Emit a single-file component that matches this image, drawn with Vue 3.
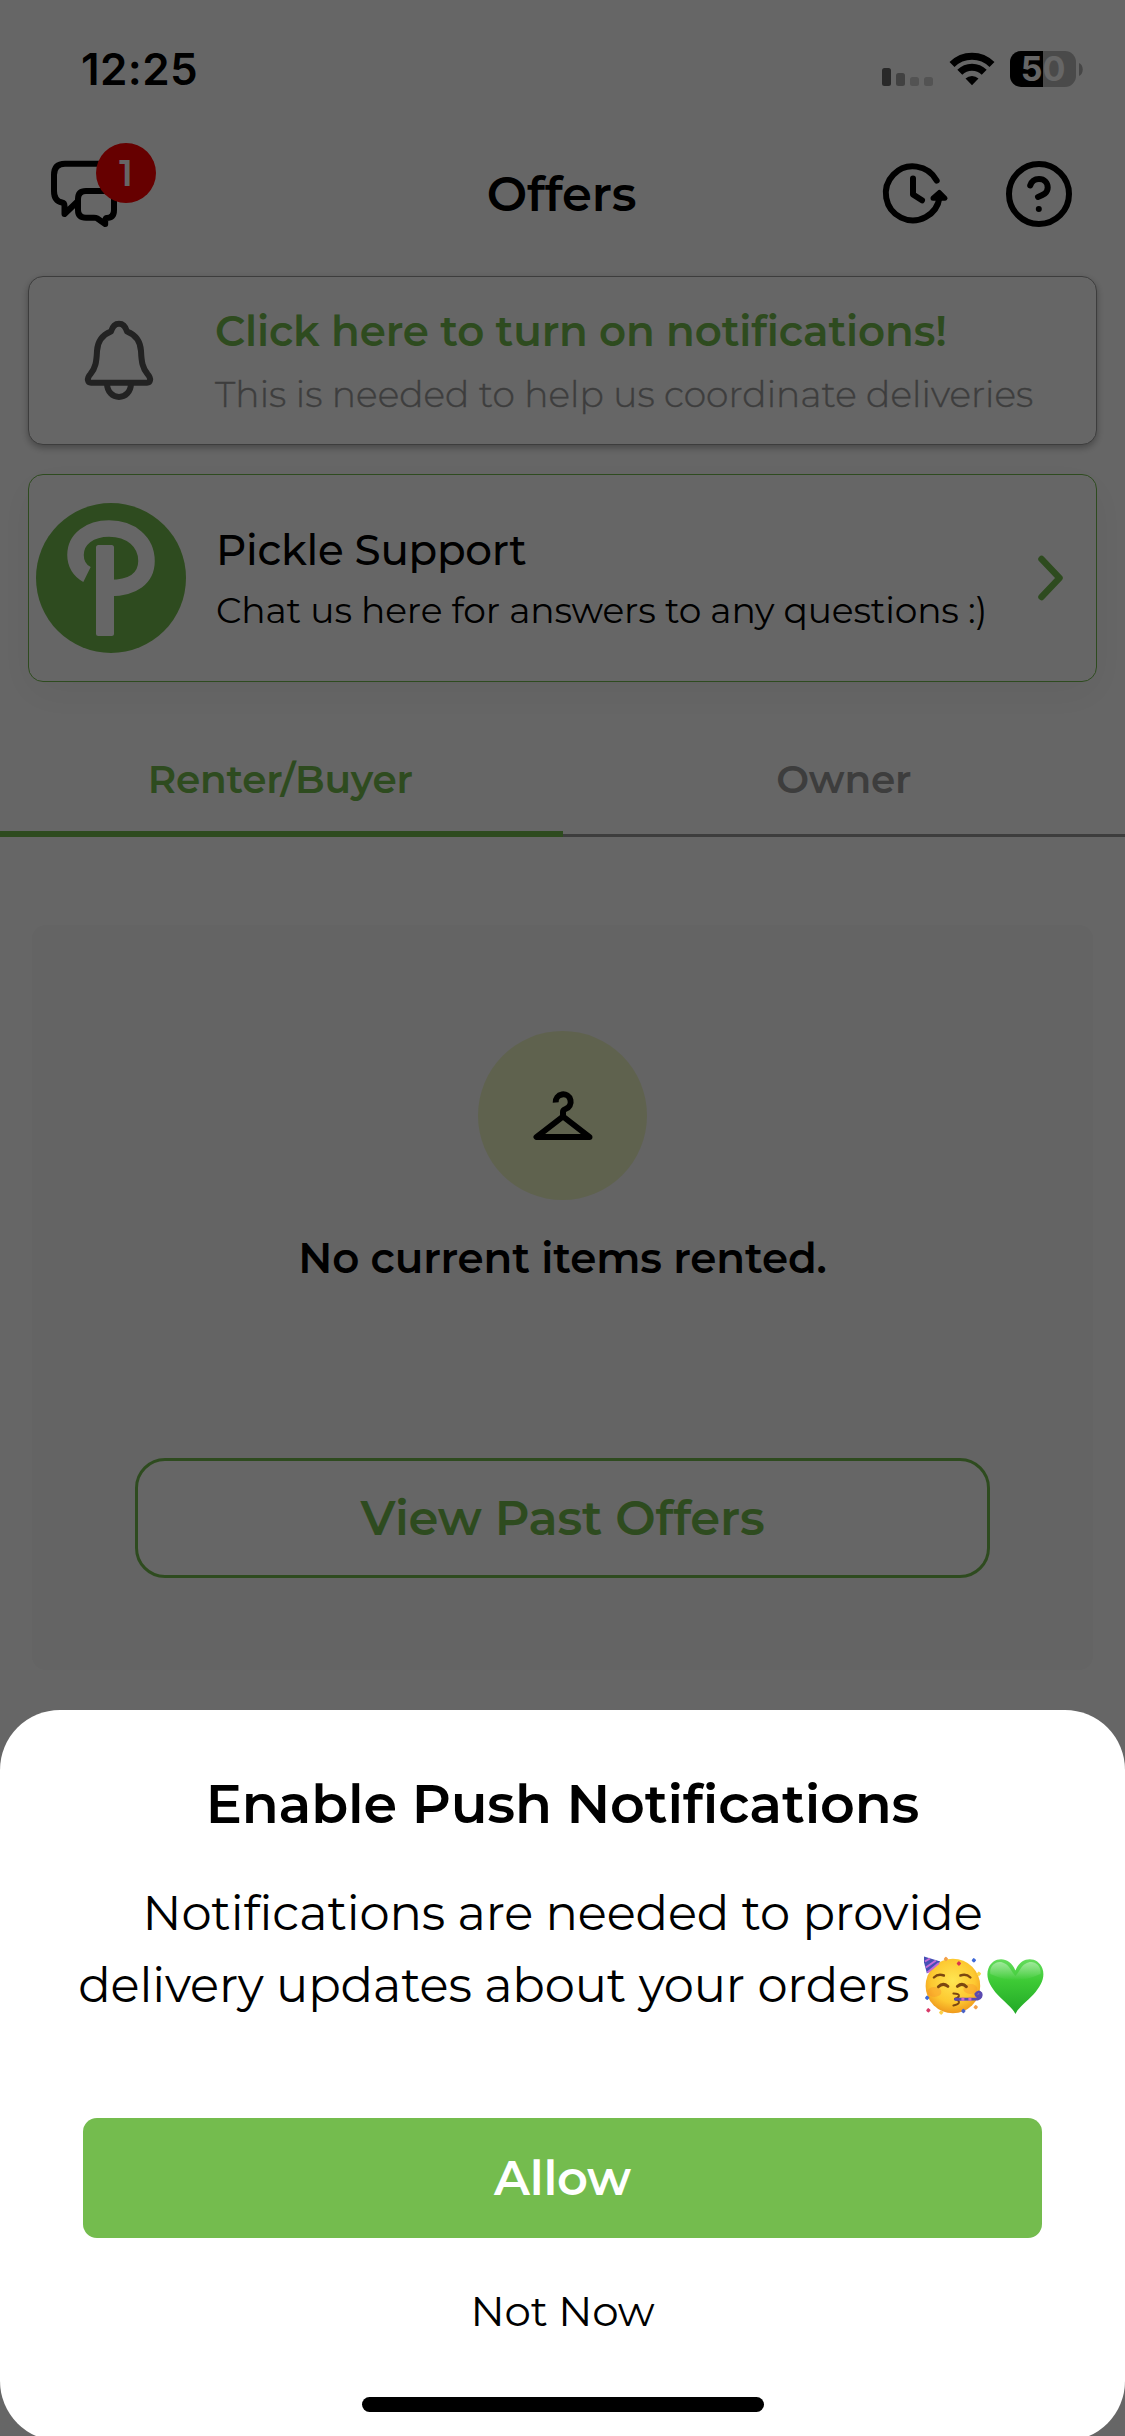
<script setup>
const signalBars = [
  { x: 0, h: 18, fill: '#666' },
  { x: 14, h: 13, fill: '#a3a3a3' },
  { x: 28, h: 9, fill: '#cfcfcf' },
  { x: 42, h: 9, fill: '#cfcfcf' },
]

const confetti = [
  { x: 44.5, y: 17.5, c: '#d8344f' },
  { x: 59.5, y: 14.3, c: '#3f6ad8' },
  { x: 31.5, y: 13, c: '#f2a04a' },
  { x: 64.5, y: 27.8, c: '#fbd84a' },
  { x: 12.8, y: 51.8, c: '#3f6ad8' },
  { x: 14, y: 64.3, c: '#d83a68' },
  { x: 26.8, y: 66.5, c: '#fbd04a' },
  { x: 49, y: 65, c: '#4a62c8' },
  { x: 61.3, y: 61.2, c: '#f2a04a' },
]
</script>

<template>
  <div class="screen">
    <main class="page">
      <div class="status">
        <span class="time">12:25</span>
        <div class="indicators">
          <svg class="signal" width="51" height="33" viewBox="0 0 51 33">
            <rect v-for="b in signalBars" :key="b.x" :x="b.x" :y="33 - b.h" width="9" :height="b.h" rx="2.5" :fill="b.fill" />
          </svg>
          <svg class="wifi" width="46" height="34" viewBox="948.5 52 46 34">
            <path d="M951.5 64.5A28.3 28.3 0 0 1 991.5 64.5" fill="none" stroke="#000" stroke-width="7" />
            <path d="M959.3 72.3A17.3 17.3 0 0 1 983.7 72.3" fill="none" stroke="#000" stroke-width="7" />
            <path d="M965 78.6A9.3 9.3 0 0 1 978 78.6L971.5 85.2Z" />
          </svg>
          <div class="battery"><span>50</span></div>
          <svg width="4" height="13" viewBox="0 0 4 13"><path d="M0 0C5 2 5 11 0 13Z" fill="#b0b0b0" /></svg>
        </div>
      </div>

      <header class="header">
        <div class="chats">
          <svg width="72" height="72" viewBox="48 158 72 72" fill="none" stroke="#000" stroke-width="6" stroke-linejoin="round" stroke-linecap="round">
            <path d="M109 188V174Q109 163.700 98.500 163.700H65Q54 163.700 54 175V191Q54 201 62 202.500Q64.500 203 64.500 206V214L77 202" />
            <path d="M86 191H106Q114 191 114 199V210Q114 218 106.500 218Q105 218 105.200 224L97 218.300Q96 217.700 94 217.700H86Q78 217.700 78 210V199Q78 191 86 191Z" />
          </svg>
          <span class="badge">1</span>
        </div>
        <h1>Offers</h1>
        <div class="actions">
          <svg width="70" height="68" viewBox="13 15 70 68" fill="none" stroke="#000" stroke-width="6" stroke-linecap="round" stroke-linejoin="round">
            <path d="M70.700 35.700A27 27 0 1 0 73.600 52" />
            <path d="M67 53.200L73.300 47.500L79 53.200Z" fill="#000" stroke-width="5" />
            <path d="M47 33.500V49.500L56 55.300" />
          </svg>
          <svg width="68" height="68" viewBox="139 15 68 68" fill="none" stroke="#000" stroke-width="6" stroke-linecap="round">
            <circle cx="173" cy="49" r="30" />
            <path d="M164.200 40.500C165.500 36.500 169 34 173 34C178.500 34 181.700 38 181.700 42.500C181.700 48 177 50 172 52" />
            <circle cx="172.800" cy="64" r="3" fill="#000" stroke="none" />
          </svg>
        </div>
      </header>

      <section class="card notice">
        <svg width="72" height="84" viewBox="83 319 72 84" fill="none" stroke="#555" stroke-width="6" stroke-linejoin="round">
          <path d="M119 323.700C114 323.700 112 328 111 331.500C102 335 97.500 342 97 351C96.500 362 95.500 368 90.500 374C86 379 88 382.700 91 382.700H147C150 382.700 152 379 147.500 374C142.500 368 141.500 362 141 351C140.500 342 136 335 127 331.500C126 328 124 323.700 119 323.700Z" />
          <path d="M107 383C107 401.500 131 401.500 131 383" />
        </svg>
        <div class="copy">
          <p class="title">Click here to turn on notifications!</p>
          <p class="sub">This is needed to help us coordinate deliveries</p>
        </div>
      </section>

      <section class="card support">
        <svg width="150" height="150" viewBox="6 8 150 150">
          <circle cx="81" cy="83" r="75" fill="#74bc4e" />
          <path d="M57 79.500C50 76 45.500 69 45.500 60C45.500 44 60 33.500 79 33.500C101 33.500 116.500 47 116.500 66C116.500 83 103 93 80 93" fill="none" stroke="#fff" stroke-width="16.500" />
          <rect x="66" y="50" width="18" height="91" rx="2.500" fill="#fff" />
        </svg>
        <div class="copy">
          <p class="title">Pickle Support</p>
          <p class="sub">Chat us here for answers to any questions :)</p>
        </div>
        <svg class="chevron" width="27" height="48" viewBox="0 0 27 48" fill="none" stroke="#74bc4e" stroke-width="6.500" stroke-linecap="round" stroke-linejoin="round">
          <path d="M4.500 5L22.500 24L4.500 43" />
        </svg>
      </section>

      <nav class="tabs">
        <span class="tab active">Renter/Buyer</span>
        <span class="tab">Owner</span>
      </nav>

      <section class="panel">
        <div class="circle">
          <svg width="66" height="54" viewBox="530 1088 66 54" fill="none" stroke="#000" stroke-width="6" stroke-linejoin="round">
            <path d="M555.700 1101.500A7.500 7.500 0 1 1 565.500 1108Q563 1108.800 563 1111V1115.500" />
            <path d="M563 1115.500L536.500 1136H589.500Z" />
          </svg>
        </div>
        <p class="empty">No current items rented.</p>
        <button class="past">View Past Offers</button>
      </section>
    </main>

    <div class="overlay"></div>

    <section class="sheet">
      <h2>Enable Push Notifications</h2>
      <p class="message">
        Notifications are needed to provide<br />delivery updates about your orders
        <svg class="emoji" role="img" aria-label="🥳💚" width="124" height="66" viewBox="9.600 5 124 66">
          <defs>
            <radialGradient id="face" cx=".5" cy=".4" r=".62">
              <stop offset="0" stop-color="#ffe652" />
              <stop offset=".65" stop-color="#fdc830" />
              <stop offset="1" stop-color="#ee951b" />
            </radialGradient>
            <linearGradient id="heart" x1="0" y1="0" x2="0" y2="1">
              <stop offset="0" stop-color="#64dc5c" />
              <stop offset=".4" stop-color="#3dca35" />
              <stop offset="1" stop-color="#22a827" />
            </linearGradient>
            <linearGradient id="shine" x1="0" y1="0" x2="0" y2="1">
              <stop offset="0" stop-color="#fff" stop-opacity=".4" />
              <stop offset="1" stop-color="#fff" stop-opacity="0" />
            </linearGradient>
          </defs>
          <circle cx="38.500" cy="40" r="27.300" fill="url(#face)" />
          <ellipse cx="20" cy="46" rx="7" ry="5" fill="#f58a2a" opacity=".35" />
          <ellipse cx="56" cy="43" rx="7" ry="5" fill="#f58a2a" opacity=".35" />
          <path d="M8 10L26 15.500Q20 22 12.500 27.500Z" fill="#4650b5" />
          <path d="M10.500 15.500L15.500 12.500M11.500 21.500L21.500 14.500M13 26.500L24.500 17" stroke="#c56bd8" stroke-width="2" />
          <g fill="none" stroke="#7c4710" stroke-width="2.400" stroke-linecap="round">
            <path d="M19.500 31.500Q23.500 27.500 29.500 29.500" />
            <path d="M46 29.500Q52 27.500 56 31.500" />
            <path d="M24 40.700Q28.500 36.200 33.500 40.300" stroke-width="3" />
            <path d="M43 40.300Q48 36.200 52 40.700" stroke-width="3" />
            <path d="M39 47.500Q45 47.500 44.500 50Q44 52 40 53Q45 54 44.500 56.500Q44 58.500 39 59.500" stroke-width="2" />
          </g>
          <path d="M41 53.300L63 53Q68 51 66.500 47.500Q64 44.500 61.500 48Q62 51 64.500 49.500" fill="none" stroke="#5a4ab0" stroke-width="3" stroke-linecap="round" />
          <path d="M47 53.300H50M54 53.200H57" stroke="#d06ac8" stroke-width="3" />
          <rect v-for="(p, i) in confetti" :key="i" :x="p.x - 1.800" :y="p.y - 1.800" width="3.600" height="3.600" rx="1" :fill="p.c" :transform="`rotate(40 ${p.x} ${p.y})`" />
          <path d="M101 68C98 61.500 90 56 83 48.500C75 39.500 71 31 74 22.500C78.500 10.500 95 9.500 101 24.500C107 9.500 123.500 10.500 128 22.500C131 31 127 39.500 119 48.500C112 56 104 61.500 101 68Z" fill="url(#heart)" />
          <path d="M76 28C74 17 88 10 96 23Q99 28 101 30Q103 28 106 23C114 10 128 17 126 28Q113 34 101 34Q89 34 76 28Z" fill="url(#shine)" />
        </svg>
      </p>
      <button class="allow">Allow</button>
      <button class="later">Not Now</button>
      <div class="home"></div>
    </section>
  </div>
</template>

<style>
body { margin: 0; }
</style>

<style scoped>
.screen {
  position: relative;
  width: 1125px;
  height: 2436px;
  overflow: hidden;
  background: #fff;
  color: #000;
  font-family: Montserrat, Inter, sans-serif;
}
h1, h2, p { margin: 0; }
svg { display: block; flex: none; }
button { font-family: inherit; padding: 0; border: 0; background: none; color: inherit; }

.page { display: flex; flex-direction: column; }
.status {
  height: 138px;
  box-sizing: border-box;
  padding: 0 42px 0 81px;
  display: flex;
  align-items: center;
  justify-content: space-between;
  font-family: Inter, sans-serif;
}
.time { font-size: 44px; font-weight: 600; line-height: 54px; letter-spacing: .4px; }
.indicators { display: flex; align-items: center; }
.wifi { margin: 0 15px 0 16px; }
.battery {
  width: 66px;
  height: 36px;
  margin-right: 3px;
  border-radius: 11px;
  background: linear-gradient(90deg, #000 50%, #b9b9b9 50%);
  color: #fff;
  font-size: 34px;
  font-weight: 700;
  line-height: 36px;
  text-align: center;
}

.header {
  height: 112px;
  padding: 0 52px 0 50px;
  display: grid;
  grid-template-columns: 1fr auto 1fr;
  align-items: center;
}
.chats { position: relative; width: 72px; margin-left: -2px; }
.badge {
  position: absolute;
  left: 48px;
  top: -15px;
  width: 60px;
  height: 60px;
  border-radius: 50%;
  background: #f00;
  color: #fff;
  font-size: 36px;
  font-weight: 600;
  line-height: 60px;
  text-align: center;
}
h1 { font-size: 48px; font-weight: 600; line-height: 60px; letter-spacing: -.15px; }
.actions { display: flex; gap: 56px; justify-content: flex-end; }

.card {
  margin: 0 28px;
  box-sizing: border-box;
  border-radius: 15px;
  border: 1px solid #999;
  background: #fff;
  display: flex;
  align-items: center;
}
.notice {
  height: 169px;
  margin-top: 26px;
  padding-left: 54px;
  gap: 60px;
  box-shadow: 0 3px 7px rgba(0, 0, 0, .3);
}
.notice .copy { padding-top: 4px; }
.notice .title { color: #74bc4e; font-size: 42px; font-weight: 600; line-height: 63px; letter-spacing: -.14px; }
.notice .sub { color: #999; font-size: 36px; font-weight: 300; line-height: 63px; letter-spacing: .07px; -webkit-text-stroke: .4px #999; }
.support {
  height: 208px;
  margin-top: 29px;
  padding: 0 32px 0 7px;
  gap: 30px;
  border-color: #74bc4e;
  box-shadow: 0 12px 40px rgba(0, 0, 0, .05);
}
.support .copy { padding-top: 4px; }
.support .title { font-size: 42px; font-weight: 500; line-height: 60px; letter-spacing: -.25px; }
.support .sub { font-size: 36px; font-weight: 400; line-height: 60px; letter-spacing: -.16px; }
.chevron { margin-left: auto; }

.tabs { display: flex; height: 116px; margin-top: 39px; }
.tab {
  flex: 1;
  text-align: center;
  font-size: 39px;
  font-weight: 600;
  line-height: 116px;
  letter-spacing: -.22px;
  color: #999;
  box-shadow: inset 0 -3px #999;
}
.tab.active { color: #74bc4e; box-shadow: inset 0 -6px #74bc4e; text-indent: -2px; }

.panel {
  height: 745px;
  margin: 88px 32px 0;
  box-sizing: border-box;
  padding: 106px 103px 0;
  border-radius: 14px;
  background: #f9f9f9;
  display: flex;
  flex-direction: column;
  align-items: center;
}
.circle {
  width: 169px;
  height: 169px;
  border-radius: 50%;
  background: #edf5c3;
  display: flex;
  align-items: center;
  justify-content: center;
}
.empty { margin-top: 28px; font-size: 42px; font-weight: 600; line-height: 60px; letter-spacing: -.14px; }
.past {
  align-self: stretch;
  height: 120px;
  margin-top: 170px;
  border: 3px solid #74bc4e;
  border-radius: 30px;
  background: #fff;
  color: #74bc4e;
  font-size: 48px;
  font-weight: 600;
  letter-spacing: -.2px;
}

.overlay { position: absolute; inset: 0; background: rgba(0, 0, 0, .6); }
.sheet {
  position: absolute;
  left: 0;
  right: 0;
  bottom: -5px;
  height: 731px;
  box-sizing: border-box;
  padding-top: 61px;
  border-radius: 60px;
  background: #fff;
  display: flex;
  flex-direction: column;
  align-items: center;
}
h2 { font-size: 54px; font-weight: 600; line-height: 66px; letter-spacing: -.17px; }
.message { margin-top: 40px; font-size: 48px; line-height: 72px; letter-spacing: -.14px; text-align: center; white-space: nowrap; }
.emoji { display: inline-block; vertical-align: -14.500px; margin: 0 -1px 0 2px; }
.allow {
  width: 959px;
  height: 120px;
  margin-top: 97px;
  border-radius: 14px;
  background: #74bc4e;
  color: #fff;
  font-size: 48px;
  font-weight: 600;
  letter-spacing: -.2px;
}
.later { margin-top: 43px; font-size: 42px; line-height: 60px; letter-spacing: -.2px; }
.home { width: 402px; height: 15px; margin-top: 56px; border-radius: 8px; background: #000; }
</style>
